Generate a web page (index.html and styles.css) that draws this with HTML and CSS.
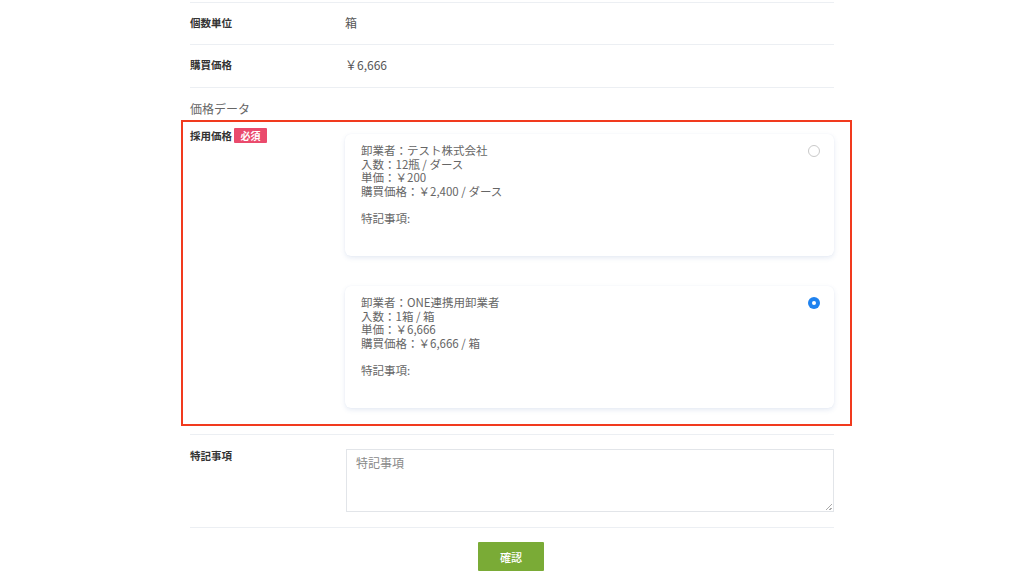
FILE: index.html
```html
<!DOCTYPE html>
<html lang="ja">
<head>
<meta charset="utf-8">
<title>価格データ</title>
<link rel="stylesheet" href="styles.css">
</head>
<body>
<div class="page">
  <div class="row">
    <div class="label">個数単位</div>
    <div class="value">箱</div>
  </div>
  <div class="row row-tall">
    <div class="label">購買価格</div>
    <div class="value">￥6,666</div>
  </div>
  <div class="section-head">価格データ</div>
  <div class="row row-top adopt">
    <div class="label label-top">採用価格<span class="badge">必須</span></div>
    <div class="cards">
      <div class="card">
        <div class="card-text">卸業者：テスト株式会社<br>入数：12瓶 / ダース<br>単価：￥200<br>購買価格：￥2,400 / ダース<br><br>特記事項:</div>
        <span class="radio"></span>
      </div>
      <div class="card">
        <div class="card-text">卸業者：ONE連携用卸業者<br>入数：1箱 / 箱<br>単価：￥6,666<br>購買価格：￥6,666 / 箱<br><br>特記事項:</div>
        <span class="radio checked"></span>
      </div>
    </div>
  </div>
  <div class="row row-top memo">
    <div class="label label-memo">特記事項</div>
    <div class="textarea"><span class="placeholder">特記事項</span><span class="grip"></span></div>
  </div>
  <div class="actions">
    <button class="btn">確認</button>
  </div>
  <div class="highlight"></div>
</div>
</body>
</html>
```

FILE: styles.css
```css
* { box-sizing: border-box; }
html, body { margin: 0; padding: 0; background: #fff; }
body {
  font-family: "Noto Sans CJK JP", "Noto Sans", "Liberation Sans", sans-serif;
  color: #555;
  width: 1024px;
  height: 586px;
  overflow: hidden;
}
.page {
  position: relative;
  width: 644px;
  margin-left: 190px;
  padding-top: 2px;
}
.row {
  display: grid;
  grid-template-columns: 155px 1fr;
  align-items: center;
  height: 42px;
  border-top: 1px solid #eceff3;
}
.row-tall { height: 43px; }
.row-top { align-items: start; height: auto; }
.label {
  font-size: 10.5px;
  font-weight: 700;
  color: #333;
  line-height: 14px;
  margin-top: -2px;
}
.value {
  font-size: 12px;
  color: #555;
  line-height: 16px;
  margin-top: -2px;
}
.section-head {
  border-top: 1px solid #eceff3;
  height: 33px;
  padding-top: 13px;
  font-size: 12px;
  line-height: 16px;
  color: #666;
}
.adopt { border-top: none; padding: 14px 0 26px; }
.label-top { display: flex; align-items: center; margin-top: -6px; }
.badge {
  display: inline-block;
  margin-left: 2px;
  width: 33px;
  height: 15px;
  line-height: 15px;
  text-align: center;
  background: #ea4a6c;
  color: #fff;
  font-size: 10px;
  font-weight: 700;
  border-radius: 1px;
}
.cards { display: flex; flex-direction: column; gap: 30px; }
.card {
  position: relative;
  height: 122px;
  padding: 10px 16px 0 16px;
  border-radius: 6px;
  background: #fff;
  box-shadow: 0 2px 5px rgba(60, 100, 170, 0.13), 0 0 1px rgba(60, 100, 170, 0.08);
}
.card-text {
  font-size: 11.5px;
  line-height: 13.5px;
  color: #666;
}
.radio {
  position: absolute;
  top: 11px;
  right: 14px;
  width: 12px;
  height: 12px;
  border-radius: 50%;
  border: 1px solid #c9c9c9;
  background: #fff;
}
.radio.checked {
  border: none;
  background: #1f82ef;
}
.radio.checked::after {
  content: "";
  position: absolute;
  left: 4px;
  top: 4px;
  width: 4px;
  height: 4px;
  border-radius: 50%;
  background: #fff;
}
.memo { padding: 14px 0 15px; }
.label-memo { margin-top: 0; }
.textarea {
  position: relative;
  margin-left: 1px;
  height: 63px;
  border: 1px solid #e2e5e9;
  padding: 6px 9px;
  font-size: 12px;
  line-height: 14px;
}
.placeholder { font-size: 12px; line-height: 14px; color: #8a8a8a; }
.grip {
  position: absolute;
  right: 1px;
  bottom: 1px;
  width: 6px;
  height: 6px;
  background: linear-gradient(135deg, transparent 45%, #aaa 45%, #aaa 55%, transparent 55%, transparent 75%, #aaa 75%, #aaa 85%, transparent 85%);
}
.actions {
  border-top: 1px solid #eceff3;
  padding-top: 14px;
  display: flex;
  justify-content: center;
}
.btn {
  width: 66px;
  height: 29px;
  border: none;
  border-radius: 1px;
  background: #7aab36;
  color: #fff;
  font-family: inherit;
  font-size: 11px;
  font-weight: 500;
  padding: 0;
  margin-left: -2px;
}
.highlight {
  position: absolute;
  left: -9px;
  top: 120px;
  width: 671px;
  height: 306px;
  border: 2px solid #f13a1e;
  pointer-events: none;
}
```
